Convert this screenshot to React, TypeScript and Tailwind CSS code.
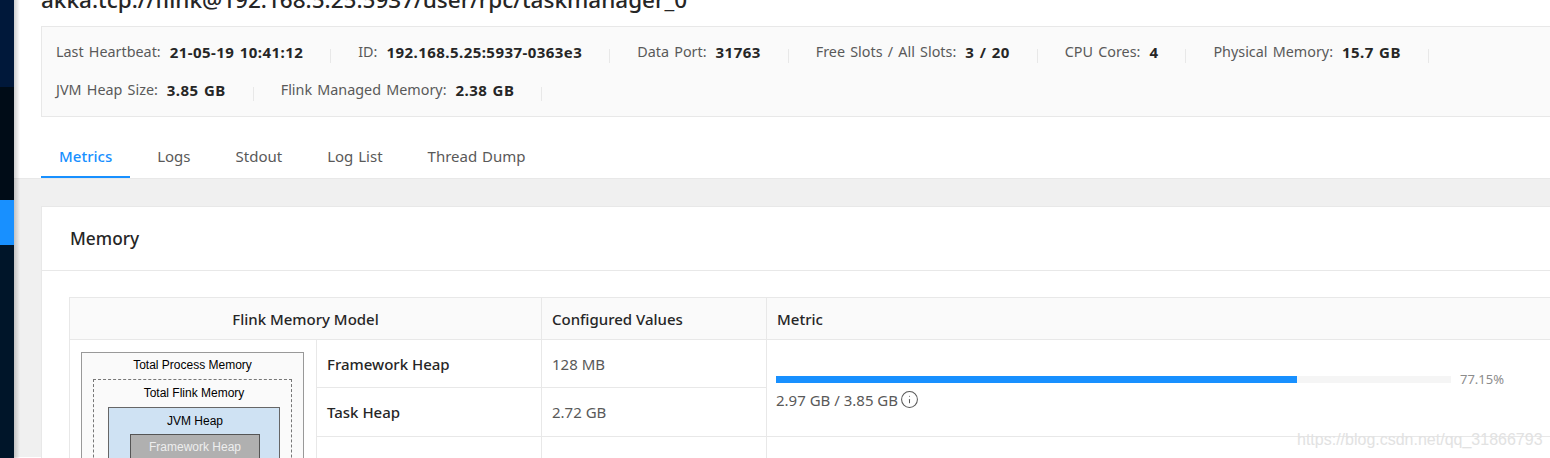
import { Info } from "lucide-react";

const font = { fontFamily: '"Noto Sans", "Open Sans", sans-serif' };

const firstRow = [
  { label: "Last Heartbeat:", value: "21-05-19 10:41:12" },
  { label: "ID:", value: "192.168.5.25:5937-0363e3" },
  { label: "Data Port:", value: "31763" },
  { label: "Free Slots / All Slots:", value: "3 / 20" },
  { label: "CPU Cores:", value: "4" },
  { label: "Physical Memory:", value: "15.7 GB" },
];

const secondRow = [
  { label: "JVM Heap Size:", value: "3.85 GB" },
  { label: "Flink Managed Memory:", value: "2.38 GB" },
];

const tabs = ["Metrics", "Logs", "Stdout", "Log List", "Thread Dump"];

function Stat({ label, value }: { label: string; value: string }) {
  return (
    <div className="flex items-center whitespace-nowrap">
      <span className="text-[14.35px] [word-spacing:1.5px] text-[#595959]">{label}</span>
      <span className="ml-[9px] text-[15px] font-bold tracking-[0.45px] [word-spacing:1px] text-[#262626]">{value}</span>
      <span className="relative top-[4px] mx-[27px] h-[14px] w-px bg-[#e8e8e8]" />
    </div>
  );
}

function MemoryDiagram() {
  return (
    <div className="h-[132px] overflow-hidden">
      <div
        className="h-[300px] w-[223px] border border-[#999] bg-[#fafafa] px-[11px] pt-[4px] text-center text-[12px] leading-[16px] text-black"
        style={{ fontFamily: '"Liberation Sans", Arial, sans-serif' }}
      >
        <div>Total Process Memory</div>
        <div className="mt-[6px] h-[280px] border border-dashed border-[#777] pt-[5px] pr-[11px] pl-[14px]">
          <div>Total Flink Memory</div>
          <div className="mt-[6px] h-[200px] border border-[#666] bg-[#cfe2f3] pt-[5px] pr-[19px] pl-[21px]">
            <div>JVM Heap</div>
            <div className="mt-[5px] h-[40px] border border-[#555] bg-[#b0b0b0] pt-[4px] text-[#eeeeee]">
              Framework Heap
            </div>
          </div>
        </div>
      </div>
    </div>
  );
}

export default function App() {
  return (
    <div className="relative flex h-[458px] w-[1550px] overflow-hidden bg-white" style={font}>
      <aside className="flex w-[14px] shrink-0 flex-col bg-[#001529]">
        <div className="h-[87px] bg-[#00183a]" />
        <div className="h-[113px] bg-[#000c17]" />
        <div className="h-[45px] bg-[#1890ff]" />
      </aside>

      <main className="relative min-w-0 flex-1">
        <div className="pointer-events-none absolute inset-y-0 left-0 w-[6px] bg-gradient-to-r from-[#00000030] to-transparent" />

        <div className="w-[1600px] pl-[27px]">
          <h1 className="-mt-[14px] h-[40px] text-[22.5px] leading-[28px] font-medium whitespace-nowrap text-[#262626]">
            akka.tcp://flink@192.168.5.25:5937/user/rpc/taskmanager_0
          </h1>
          <div className="h-[91px] border border-[#e8e8e8] bg-[#fafafa] px-[14px] pt-[14px]">
            <div className="flex h-[22px] items-center">
              {firstRow.map((s) => (
                <Stat key={s.label} {...s} />
              ))}
            </div>
            <div className="mt-[16px] flex h-[22px] items-center">
              {secondRow.map((s) => (
                <Stat key={s.label} {...s} />
              ))}
            </div>
          </div>
          <nav className="mt-[18px] flex h-[43px] gap-[9px]">
            {tabs.map((tab, i) => (
              <div
                key={tab}
                className={
                  i === 0
                    ? "flex items-center border-b-2 border-[#1890ff] px-[18px] pt-[2px] text-[15px] font-medium text-[#1890ff]"
                    : "flex items-center border-b-2 border-transparent px-[18px] pt-[2px] text-[15px] [word-spacing:1px] text-[#595959]"
                }
              >
                {tab}
              </div>
            ))}
          </nav>
        </div>

        <div className="h-[279px] border-t border-[#e8e8e8] bg-[#f0f0f0] pt-[27px] pl-[27px]">
          <section className="h-[260px] w-[1600px] border border-[#e8e8e8] bg-white">
            <div className="flex h-[64px] items-center border-b border-[#e8e8e8] pl-[28px] text-[17.3px] font-medium text-[#262626]">
              Memory
            </div>
            <div className="pt-[26px] pl-[27px]">
              <table className="w-[1500px] table-fixed border-collapse border border-[#e8e8e8] text-[15px]">
                <colgroup>
                  <col className="w-[247px]" />
                  <col className="w-[225px]" />
                  <col className="w-[225px]" />
                  <col />
                </colgroup>
                <thead>
                  <tr className="h-[42px] bg-[#fafafa] text-[#262626]">
                    <th colSpan={2} className="border border-[#e8e8e8] pt-[2px] text-center font-medium">
                      Flink Memory Model
                    </th>
                    <th className="border border-[#e8e8e8] px-[10px] pt-[2px] text-left font-medium">Configured Values</th>
                    <th className="border border-[#e8e8e8] px-[10px] pt-[2px] text-left font-medium">Metric</th>
                  </tr>
                </thead>
                <tbody>
                  <tr className="h-[48px]">
                    <td rowSpan={3} className="border border-[#e8e8e8] px-[11px] pt-[12px] align-top">
                      <MemoryDiagram />
                    </td>
                    <td className="border border-[#e8e8e8] px-[10px] pt-[2px] font-medium text-[#262626]">Framework Heap</td>
                    <td className="border border-[#e8e8e8] px-[10px] pt-[2px] text-[#595959]">128 MB</td>
                    <td rowSpan={2} className="border border-[#e8e8e8] px-[9px] align-top">
                      <div className="mt-[30px] flex items-center">
                        <div className="h-[7px] w-[675px] bg-[#f5f5f5]">
                          <div className="h-full w-[77.15%] bg-[#1890ff]" />
                        </div>
                        <span className="ml-[9px] text-[13px] text-[#8c8c8c]">77.15%</span>
                      </div>
                      <div className="-mt-[1px] flex items-center text-[#595959]">
                        <span>2.97 GB / 3.85 GB</span>
                        <Info size={19} strokeWidth={1.3} className="ml-[2px]" />
                      </div>
                    </td>
                  </tr>
                  <tr className="h-[49px]">
                    <td className="border border-[#e8e8e8] px-[10px] font-medium text-[#262626]">Task Heap</td>
                    <td className="border border-[#e8e8e8] px-[10px] text-[#595959]">2.72 GB</td>
                  </tr>
                  <tr className="h-[48px]">
                    <td className="border border-[#e8e8e8]" />
                    <td className="border border-[#e8e8e8]" />
                    <td className="border border-[#e8e8e8]" />
                  </tr>
                </tbody>
              </table>
            </div>
          </section>
        </div>
      </main>

      <div
        className="absolute top-[430px] left-[1297px] text-[16px] leading-[20px] whitespace-nowrap text-[#e2e2e2]"
        style={{ fontFamily: '"Liberation Sans", Arial, sans-serif' }}
      >
        https://blog.csdn.net/qq_31866793
      </div>
    </div>
  );
}
